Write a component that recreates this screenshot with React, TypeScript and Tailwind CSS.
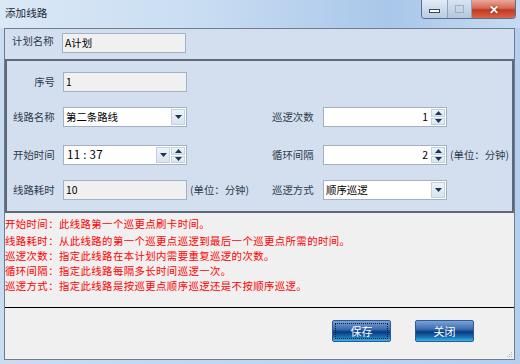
import React from "react";

const FONT = { fontFamily: '"Noto Sans CJK SC", "Noto Sans", sans-serif' };

function Arrow({ dir }: { dir: "up" | "down" }) {
  return (
    <svg width="7" height="4" viewBox="0 0 7 4" className="block">
      {dir === "down" ? (
        <path d="M0 0h7L3.5 4z" fill="#1d3557" />
      ) : (
        <path d="M0 4h7L3.5 0z" fill="#1d3557" />
      )}
    </svg>
  );
}

function DropBtn() {
  return (
    <div className="my-[1px] mr-[1px] flex w-[14px] items-center justify-center border border-[#c3d0e0] bg-gradient-to-b from-[#eef3f9] to-[#d9e3ef]">
      <Arrow dir="down" />
    </div>
  );
}

function SpinBtn() {
  return (
    <div className="my-[1px] mr-[1px] flex w-[14px] flex-col gap-[1px]">
      <div className="flex flex-1 items-center justify-center border border-[#c3d0e0] bg-gradient-to-b from-[#eef3f9] to-[#d9e3ef]">
        <Arrow dir="up" />
      </div>
      <div className="flex flex-1 items-center justify-center border border-[#c3d0e0] bg-gradient-to-b from-[#eef3f9] to-[#d9e3ef]">
        <Arrow dir="down" />
      </div>
    </div>
  );
}

function Field({
  value,
  disabled,
  kind,
  align = "left",
}: {
  value: string;
  disabled?: boolean;
  kind?: "combo" | "spin" | "time";
  align?: "left" | "right";
}) {
  return (
    <div
      className={`flex h-[20px] w-[124px] border border-[#9fb2c8] ${
        disabled ? "bg-[#f0f0f0]" : "bg-white"
      }`}
    >
      <span
        className={`flex flex-1 items-center whitespace-pre px-[2px] text-[10.4px] text-black ${
          align === "right" ? "justify-end pr-[3px]" : ""
        } ${kind === "time" ? "pl-[3px] text-[11.5px] tracking-[0.3px]" : ""}`}
      >
        {value}
      </span>
      {kind === "combo" && <DropBtn />}
      {kind === "spin" && <SpinBtn />}
      {kind === "time" && (
        <>
          <DropBtn />
          <SpinBtn />
        </>
      )}
    </div>
  );
}

function Label({ children, w }: { children: React.ReactNode; w: string }) {
  return (
    <span className={`${w} shrink-0 text-[10.4px] text-[#2f3b4d]`}>{children}</span>
  );
}

function Unit() {
  return <span className="ml-[3px] text-[10.4px] text-[#2f3b4d]">(单位：分钟)</span>;
}

function BlueButton({ label, focused }: { label: string; focused?: boolean }) {
  return (
    <div className="relative flex h-[22px] w-[59px] items-center justify-center rounded-[2px] border border-[#2d5b98] bg-[linear-gradient(to_bottom,#7aa3d6_0%,#3c6db0_40%,#0a3a7e_55%,#1a6fb4_80%,#35b6e8_100%)]">
      {focused && (
        <div className="absolute inset-[2px] border border-dotted border-[#0b1c33]" />
      )}
      <span className="text-[11px] text-white">{label}</span>
    </div>
  );
}

export default function App() {
  return (
    <div
      className="flex h-[364px] w-[520px] flex-col bg-[linear-gradient(to_right,#c9dcf1,#b4cfee)]"
      style={FONT}
    >
      {/* 标题栏 */}
      <div className="relative flex h-[28px] shrink-0 items-start bg-[linear-gradient(to_right,#dbe8f6_0%,#c8dcf2_40%,#a9c7ea_75%,#c6dbf2_100%)]">
        <span className="ml-[5px] mt-[5px] text-[10.6px] text-[#1b2736]">添加线路</span>
        <div className="ml-auto mr-[4px] flex h-[19px] overflow-hidden rounded-b-[4px] border border-t-0 border-[#5a6f8c]">
          <div className="flex w-[26px] items-center justify-center border-r border-[#8ea3bf] bg-gradient-to-b from-[#e2ebf6] to-[#b8cbe2]">
            <div className="mt-[3px] h-[4px] w-[11px] border border-[#39475a] bg-white" />
          </div>
          <div className="flex w-[24px] items-center justify-center border-r border-[#8ea3bf] bg-gradient-to-b from-[#d9e4f1] to-[#b5c7dd]">
            <div className="h-[8px] w-[9px] border border-[#9fb0c5]" />
          </div>
          <div className="flex w-[43px] items-center justify-center bg-[linear-gradient(to_bottom,#e9a898_0%,#d66a55_45%,#c23a22_55%,#d9644a_100%)]">
            <span className="text-[12px] font-bold leading-none text-white [text-shadow:0_0_2px_#5a1a10]">✕</span>
          </div>
        </div>
      </div>

      {/* 客户区 */}
      <div className="mb-[4px] ml-[4px] mr-[5px] flex flex-1 flex-col border border-[#6f7d8e] bg-[#f0f0f0]">
        {/* 计划名称 */}
        <div className="flex h-[30px] items-start bg-[#d3dfee] pt-[4px]">
          <Label w="w-[49px] pl-[7px]">计划名称</Label>
          <div className="ml-[8px]">
            <Field value="A计划" disabled />
          </div>
        </div>
        <div className="h-[2px] bg-[#5c6978]" />

        {/* 线路参数 */}
        <div className="flex h-[152px] flex-col border-x-2 border-b-2 border-[#5c6978] bg-[#d3dfee] pt-[11px]">
          <div className="flex items-center">
            <div className="flex w-[265px] items-center">
              <Label w="w-[48px] text-right">序号</Label>
              <div className="ml-[8px]">
                <Field value="1" disabled />
              </div>
            </div>
          </div>

          <div className="mt-[15px] flex items-center">
            <div className="flex w-[265px] items-center">
              <Label w="w-[48px] pl-[6px]">线路名称</Label>
              <div className="ml-[8px]">
                <Field value="第二条路线" kind="combo" />
              </div>
            </div>
            <Label w="w-[51px]">巡逻次数</Label>
            <Field value="1" kind="spin" align="right" />
          </div>

          <div className="mt-[18px] flex items-center">
            <div className="flex w-[265px] items-center">
              <Label w="w-[48px] pl-[6px]">开始时间</Label>
              <div className="ml-[8px]">
                <Field value="11 : 37" kind="time" />
              </div>
            </div>
            <Label w="w-[51px]">循环间隔</Label>
            <Field value="2" kind="spin" align="right" />
            <Unit />
          </div>

          <div className="mt-[15px] flex items-center">
            <div className="flex w-[265px] items-center">
              <Label w="w-[48px] pl-[6px]">线路耗时</Label>
              <div className="ml-[8px]">
                <Field value="10" disabled />
              </div>
              <Unit />
            </div>
            <Label w="w-[51px]">巡逻方式</Label>
            <Field value="顺序巡逻" kind="combo" />
          </div>
        </div>

        {/* 说明 */}
        <div className="mt-[3px] flex flex-col text-[10.4px] leading-[15px] tracking-[0.4px] text-[#ff0000]">
          <span className="mb-[2px]">开始时间：此线路第一个巡更点刷卡时间。</span>
          <span>线路耗时：从此线路的第一个巡更点巡逻到最后一个巡更点所需的时间。</span>
          <span>巡逻次数：指定此线路在本计划内需要重复巡逻的次数。</span>
          <span>循环间隔：指定此线路每隔多长时间巡逻一次。</span>
          <span>巡逻方式：指定此线路是按巡更点顺序巡逻还是不按顺序巡逻。</span>
        </div>

        <div className="mt-auto">
          <div className="h-[1px] bg-black" />
          <div className="relative flex h-[51px] items-start justify-end gap-[24px] pr-[40px] pt-[12px]">
            <BlueButton label="保存" focused />
            <BlueButton label="关闭" />
            <div className="absolute bottom-[2px] right-[2px] grid grid-cols-3 gap-[1px]">
              {[0, 0, 1, 0, 1, 1, 1, 1, 1].map((v, i) => (
                <div
                  key={i}
                  className={`h-[1px] w-[1px] ${v ? "bg-[#b0b6bf]" : "bg-transparent"}`}
                />
              ))}
            </div>
          </div>
        </div>
      </div>
    </div>
  );
}
